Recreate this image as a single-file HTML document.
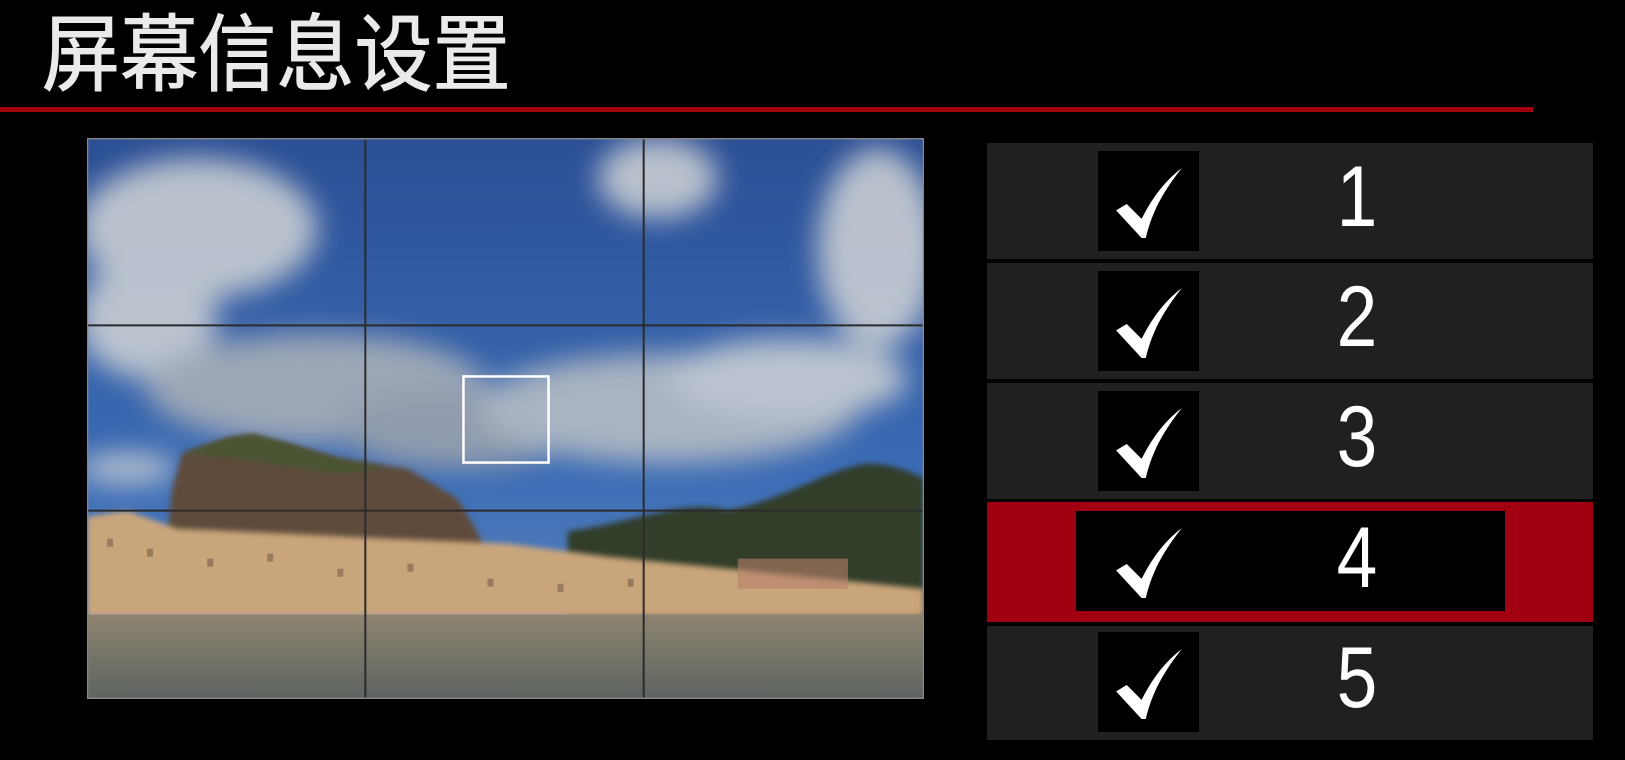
<!DOCTYPE html>
<html><head><meta charset="utf-8"><style>
html,body{margin:0;padding:0;background:#000;width:1625px;height:760px;overflow:hidden;position:relative}
.t{position:absolute;left:42px;top:0px;font-family:"Liberation Sans","Noto Sans CJK SC",sans-serif;font-size:84px;color:#eaeaea;-webkit-text-stroke:1px #eaeaea;letter-spacing:0px;line-height:110px;transform:scaleX(0.93);transform-origin:left}
.line{position:absolute;left:0;top:107px;width:1533px;height:5px;background:#a3000d}
.row{position:absolute;left:987px;width:606px;background:#202020}
.cb{position:absolute;left:111px;width:101px;height:100px;background:#000}
.num{position:absolute;left:320px;width:100px;text-align:center;font-family:"Liberation Sans",sans-serif;font-size:86px;color:#fff;transform:scaleX(0.85)}
svg.ck{position:absolute;left:16px;top:16px}
</style></head><body>
<div class="t">屏幕信息设置</div>
<div class="line"></div>
<svg style="position:absolute;left:87px;top:138px" width="837" height="561" viewBox="0 0 836 560">
<defs>
<linearGradient id="sky" x1="0" y1="0" x2="0" y2="1"><stop offset="0" stop-color="#2b4f95"/><stop offset="0.6" stop-color="#3b6cb5"/><stop offset="1" stop-color="#6a8fc0"/></linearGradient>
<linearGradient id="wat" x1="0" y1="0" x2="0" y2="1"><stop offset="0" stop-color="#8d8470"/><stop offset="1" stop-color="#5d6460"/></linearGradient>
<filter id="bl"><feGaussianBlur stdDeviation="14"/></filter>
<filter id="bl2"><feGaussianBlur stdDeviation="3"/></filter>
</defs>
<rect width="836" height="560" fill="url(#sky)"/>
<g filter="url(#bl)" fill="#c9cdd3" opacity="0.9">
<ellipse cx="110" cy="90" rx="120" ry="70"/>
<ellipse cx="60" cy="180" rx="70" ry="60"/>
<ellipse cx="230" cy="250" rx="170" ry="55" fill="#a9afb8"/>
<ellipse cx="370" cy="290" rx="120" ry="40" fill="#9aa2ad"/>
<ellipse cx="580" cy="270" rx="190" ry="55" fill="#b6bcc4"/>
<ellipse cx="700" cy="240" rx="120" ry="40"/>
<ellipse cx="570" cy="40" rx="60" ry="40"/>
<ellipse cx="790" cy="110" rx="60" ry="100"/>
<ellipse cx="40" cy="330" rx="50" ry="15"/>
</g>
<path d="M480 393 C560 380 600 360 640 372 C700 360 740 330 780 325 C810 325 836 340 836 340 L836 480 L480 480Z" fill="#323c2a" filter="url(#bl2)"/>
<path d="M80 400 L85 350 L95 315 L140 300 L165 296 L200 305 L250 320 L320 330 L370 360 L390 393 L400 420 L80 420Z" fill="#5e4c3a" filter="url(#bl2)"/>
<path d="M95 315 L140 300 L165 296 L200 305 L250 320 L300 330 L250 335 L150 320Z" fill="#4a5530" filter="url(#bl2)"/>
<path d="M0 378 L40 372 L90 390 L200 395 L300 400 L420 405 L520 418 L640 430 L836 450 L836 478 L0 478Z" fill="#c9a57c" filter="url(#bl2)"/>
<path d="M650 420 L760 420 L760 450 L650 450Z" fill="#b8806a" opacity="0.6"/>
<g fill="#6b553f" opacity="0.5"><rect x="20" y="400" width="6" height="8"/><rect x="60" y="410" width="6" height="8"/><rect x="120" y="420" width="6" height="8"/><rect x="180" y="415" width="6" height="8"/><rect x="250" y="430" width="6" height="8"/><rect x="320" y="425" width="6" height="8"/><rect x="400" y="440" width="6" height="8"/><rect x="470" y="445" width="6" height="8"/><rect x="540" y="440" width="6" height="8"/></g>
<rect y="476" width="836" height="84" fill="url(#wat)"/>
<g stroke="#2b2b2b" stroke-width="2" fill="none">
<line x1="278" y1="0" x2="278" y2="560"/><line x1="556" y1="0" x2="556" y2="560"/>
<line x1="0" y1="187" x2="836" y2="187"/><line x1="0" y1="372" x2="836" y2="372"/>
</g>
<rect x="376" y="238" width="85" height="86" fill="none" stroke="#fff" stroke-width="2.5"/>
<rect x="0.5" y="0.5" width="835" height="559" fill="none" stroke="#888" stroke-width="1.5"/>
</svg>

<div class="row" style="top:143px;height:116px"><div class="cb" style="top:8px"><svg class="ck" width="70" height="72" viewBox="0 0 66 66"><path d="M2 40 L12 34 L26 48 C36 28 48 12 64 0 C48 20 36 40 30 66 L26 66Z" fill="#fff"/></svg></div><div class="num" style="top:5px">1</div></div>
<div class="row" style="top:263px;height:116px"><div class="cb" style="top:8px"><svg class="ck" width="70" height="72" viewBox="0 0 66 66"><path d="M2 40 L12 34 L26 48 C36 28 48 12 64 0 C48 20 36 40 30 66 L26 66Z" fill="#fff"/></svg></div><div class="num" style="top:5px">2</div></div>
<div class="row" style="top:383px;height:116px"><div class="cb" style="top:8px"><svg class="ck" width="70" height="72" viewBox="0 0 66 66"><path d="M2 40 L12 34 L26 48 C36 28 48 12 64 0 C48 20 36 40 30 66 L26 66Z" fill="#fff"/></svg></div><div class="num" style="top:5px">3</div></div>
<div class="row" style="top:502px;height:120px;background:#a0000f"><div style="position:absolute;left:89px;top:9px;width:429px;height:100px;background:#000"></div><div class="cb" style="top:9px;background:none"><svg class="ck" width="70" height="72" viewBox="0 0 66 66"><path d="M2 40 L12 34 L26 48 C36 28 48 12 64 0 C48 20 36 40 30 66 L26 66Z" fill="#fff"/></svg></div><div class="num" style="top:7px">4</div></div>
<div class="row" style="top:626px;height:114px"><div class="cb" style="top:6px"><svg class="ck" width="70" height="72" viewBox="0 0 66 66"><path d="M2 40 L12 34 L26 48 C36 28 48 12 64 0 C48 20 36 40 30 66 L26 66Z" fill="#fff"/></svg></div><div class="num" style="top:3px">5</div></div>
</body></html>
